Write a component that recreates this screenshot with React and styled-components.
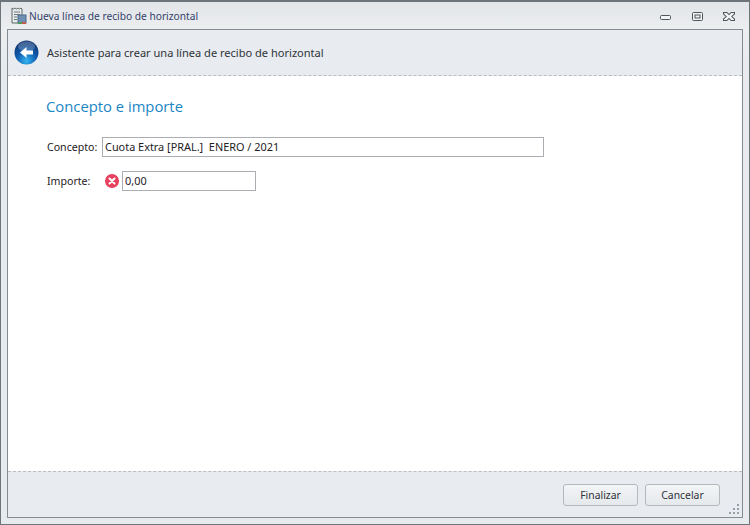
import React from 'react'
import styled, { createGlobalStyle } from 'styled-components'

const Global = createGlobalStyle`
  html, body { margin:0; padding:0; background:#e9ecef; }
  body { font-family:"Noto Sans","Liberation Sans",sans-serif; font-size:11px; color:#1e2124; }
`;
const Win = styled.div`
  width:750px; height:525px; box-sizing:border-box;
  border:1px solid #6d757a; border-top-width:2px;
  background:linear-gradient(#e2e5e8 0,#eceef0 28px,#e8ebee 60px);
  display:flex; flex-direction:column; padding:0 6px 6px;
`;
const TitleBar = styled.div`
  height:27px; flex:none; display:flex; align-items:center; padding:0 0 0 4px;
`;
const TitleText = styled.span`
  margin-left:2px; font-size:10.2px; color:#33416b; flex:1; white-space:nowrap;
`;
const WinBtns = styled.div`
  display:flex; align-items:flex-start; gap:20px; padding-right:8px; margin-top:1px;
  svg{ display:block; }
`;
const MinIcon = styled.svg`
  margin-top:3px; margin-right:1px;
`;
const Panel = styled.div`
  flex:1; min-height:0; display:flex; flex-direction:column;
  border:1px solid #858b90;
  background:#fff;
`;
const Banner = styled.div`
  height:45px; flex:none; display:flex; align-items:center; gap:8px; padding:0 0 0 6px;
  background:#e8ebef; border-bottom:1px dashed #b9bec3; box-sizing:content-box;
  font-size:11.06px; color:#2e3338;
`;
const Body = styled.div`
  flex:1; padding:20px 38px 0; display:flex; flex-direction:column;
`;
const Heading = styled.h2`
  margin:0 0 21px; font-family:"Open Sans",sans-serif; font-weight:400; font-size:14.8px; line-height:20px;
  color:#1a86c4;
`;
const Row = styled.div`
  display:flex; align-items:center; margin-bottom:14px; height:20px;
`;
const Label = styled.label`
  width:55px; padding-left:1px; flex:none; font-size:10.6px; color:#1e2124;
`;
const Field = styled.div`
  box-sizing:border-box; height:20px; width:${p => p.$w}px;
  border:1px solid #abadb3; background:#fff; padding:0 2px; line-height:18px;
  font-size:10.9px; color:#1e2124; white-space:pre;
`;
const ErrorIcon = styled.svg`
  flex:none; margin:0 3px 0 3px; display:block;
`;
const Footer = styled.div`
  height:45px; flex:none; display:flex; align-items:center; justify-content:flex-end; gap:7px;
  padding:0 22px 0 0; position:relative;
  background:#e8ebef; border-top:1px dashed #b9bec3; box-sizing:content-box;
`;
const Button = styled.button`
  width:75px; height:22px; box-sizing:border-box; padding:0;
  border:1px solid #b5b9bd; border-radius:3px;
  background:linear-gradient(#f2f4f6,#e6e9ec);
  font-family:inherit; font-size:10.4px; color:#2e3338;
`;
const Grip = styled.svg`
  position:absolute; right:2px; bottom:2px; display:block;
`;

function Receipt() {
  return (
    <svg width="16" height="18" viewBox="0 0 16 18">
      <path d="M1 1l1.5 1L4 1l1.5 1L7 1l1.5 1L10 1l1 1v14H1z" fill="#e6eaea" stroke="#5d6a66" />
      <path d="M3 5h6M3 7.5h6M3 10h3M3 12.5h3" stroke="#6f7d7a" />
      <rect x="7" y="8" width="8" height="8" fill="#6f8fb4" stroke="#4c6a8c" />
      <rect x="7" y="15" width="4" height="2" fill="#4d9a55" />
      <rect x="11" y="15" width="4" height="2" fill="#c45b4a" />
    </svg>
  );
}

function BackIcon() {
  return (
    <svg width="25" height="25" viewBox="0 0 25 25">
      <defs>
        <radialGradient id="back" cx="50%" cy="85%" r="75%">
          <stop offset="0" stopColor="#35b6f2" />
          <stop offset=".55" stopColor="#0f5cb0" />
          <stop offset="1" stopColor="#123a78" />
        </radialGradient>
      </defs>
      <circle cx="12.5" cy="12.5" r="12" fill="url(#back)" />
      <ellipse cx="12.5" cy="6.5" rx="8.5" ry="5" fill="#fff" opacity=".22" />
      <path d="M6 12.5L12.5 7v3.5H19v4h-6.5V18z" fill="#fff" />
    </svg>
  );
}

export default function App() {
  return (
    <>
      <Global />
      <Win>
        <TitleBar>
          <Receipt />
          <TitleText>Nueva línea de recibo de horizontal</TitleText>
          <WinBtns>
            <MinIcon width="11" height="6" viewBox="0 0 11 6">
              <rect x=".5" y=".5" width="10" height="4" rx="1" fill="#f2f4f5" stroke="#4f5559" />
            </MinIcon>
            <svg width="11" height="9" viewBox="0 0 11 9">
              <rect x=".5" y=".5" width="10" height="8" rx="1" fill="#f2f4f5" stroke="#4f5559" />
              <rect x="3" y="3" width="5" height="3" fill="none" stroke="#4f5559" />
            </svg>
            <svg width="12" height="9" viewBox="0 0 11 9" preserveAspectRatio="none">
              <path d="M.5.5h3l2 2 2-2h3v1.500L8 4.500l2.500 2.500v1.500h-3l-2-2-2 2h-3V7L3 4.500.5 2z" fill="#f2f4f5" stroke="#4f5559" />
            </svg>
          </WinBtns>
        </TitleBar>
        <Panel>
          <Banner>
            <BackIcon />
            <span>Asistente para crear una línea de recibo de horizontal</span>
          </Banner>
          <Body>
            <Heading>Concepto e importe</Heading>
            <Row>
              <Label>Concepto:</Label>
              <Field $w={442}>{'Cuota Extra [PRAL.]  ENERO / 2021'}</Field>
            </Row>
            <Row>
              <Label>Importe:</Label>
              <ErrorIcon width="14" height="14" viewBox="0 0 14 14">
                <circle cx="7" cy="7" r="7" fill="#e8405f" />
                <path d="M4.500 4.500l5 5M9.500 4.500l-5 5" stroke="#fff" strokeWidth="2" strokeLinecap="round" />
              </ErrorIcon>
              <Field $w={134}>0,00</Field>
            </Row>
          </Body>
          <Footer>
            <Button>Finalizar</Button>
            <Button>Cancelar</Button>
            <Grip width="11" height="11" viewBox="0 0 11 11" fill="#9aa0a5">
              <rect x="8" y="0" width="2" height="2" />
              <rect x="4" y="4" width="2" height="2" />
              <rect x="8" y="4" width="2" height="2" />
              <rect x="0" y="8" width="2" height="2" />
              <rect x="4" y="8" width="2" height="2" />
              <rect x="8" y="8" width="2" height="2" />
            </Grip>
          </Footer>
        </Panel>
      </Win>
    </>
  );
}
